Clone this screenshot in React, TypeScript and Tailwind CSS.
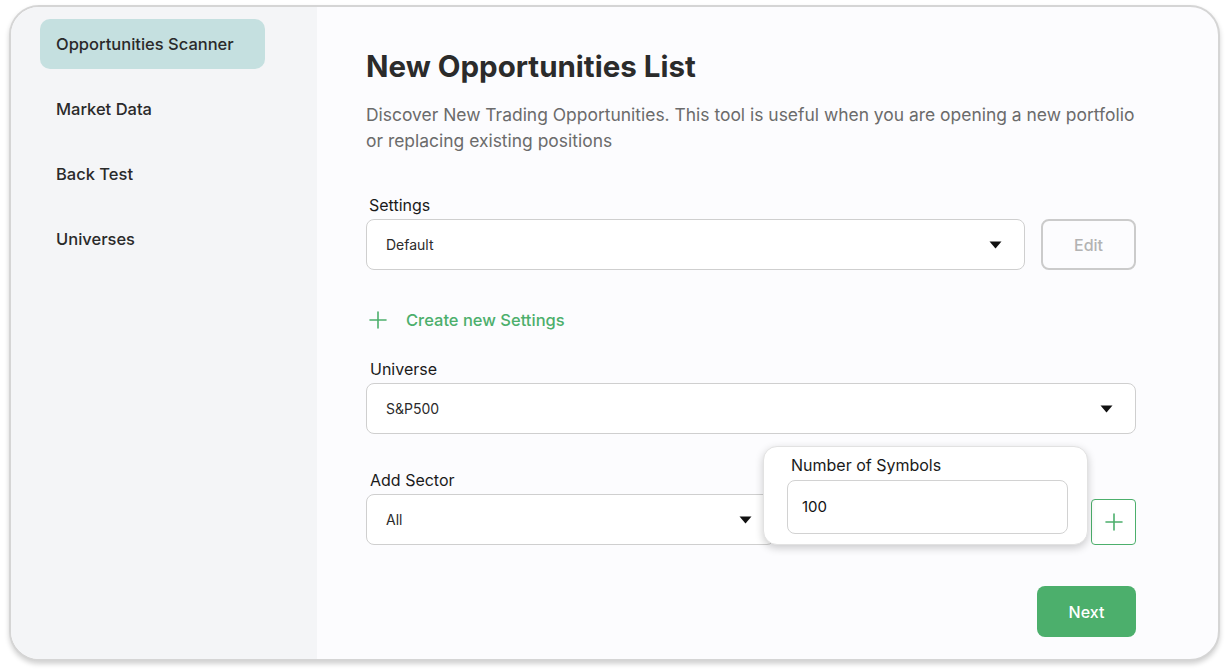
import React from "react";

const font = { fontFamily: "Inter, 'Noto Sans', sans-serif" };

function Caret() {
  return (
    <svg width="13" height="8" viewBox="0 0 13 8" className="shrink-0">
      <path d="M0.5 0.5 L12.5 0.5 L6.5 7.5 Z" fill="#111" />
    </svg>
  );
}

function Plus({ size = 18 }: { size?: number }) {
  return (
    <svg width={size} height={size} viewBox="0 0 18 18" className="shrink-0">
      <path d="M9 1 V17 M1 9 H17" stroke="#4caf6c" strokeWidth="1.6" strokeLinecap="round" />
    </svg>
  );
}

function Select({ value }: { value: string }) {
  return (
    <div className="h-[51px] w-full rounded-[8px] border border-[#cfcfcf] bg-white flex items-center justify-between pl-[19px] pr-[22px]">
      <span className="text-[14px] text-[#2b2b2b]">{value}</span>
      <Caret />
    </div>
  );
}

export default function App() {
  const nav = ["Opportunities Scanner", "Market Data", "Back Test", "Universes"];
  return (
    <div className="w-[1228px] h-[672px] bg-white overflow-hidden" style={font}>
      <div className="ml-[9px] mt-[5px] w-[1211px] h-[656px] rounded-[30px] border-2 border-[#d5d5d5] shadow-[0_3px_5px_rgba(0,0,0,0.18)] overflow-hidden flex bg-[#fcfcfe]">
        <aside className="w-[306px] shrink-0 h-full bg-[#f4f5f7] pt-[12px] pl-[29px] flex flex-col gap-[15px]">
          {nav.map((n, i) => (
            <div
              key={n}
              className={`w-[225px] h-[50px] rounded-[10px] flex items-center pl-[16px] text-[16.5px] font-medium text-[#2a2a2a] ${
                i === 0 ? "bg-[#c5e0e0]" : ""
              }`}
            >
              {n}
            </div>
          ))}
        </aside>
        <main className="flex-1 min-w-0 pl-[49px] pt-[41px] pr-[82px]">
          <h1 className="text-[29.5px] leading-[36px] font-bold text-[#2b2b2b]">New Opportunities List</h1>
          <p className="mt-[18px] mr-[-12px] text-[17.45px] leading-[26px] text-[#6b6b6b]">
            Discover New Trading Opportunities. This tool is useful when you are opening a new portfolio or
            replacing existing positions
          </p>

          <div className="mt-[39px] text-[16px] leading-[24px] text-[#1a1a1a] pl-[3px]">Settings</div>
          <div className="mt-[2px] flex gap-[16px]">
            <div className="flex-1">
              <Select value="Default" />
            </div>
            <button className="w-[95px] h-[51px] rounded-[8px] border-2 border-[#cbcbcb] text-[16px] font-medium text-[#b3b3b3] bg-[#fcfcfe]">
              Edit
            </button>
          </div>

          <div className="mt-[38px] flex items-center h-[24px] pl-[3px]">
            <Plus />
            <span className="ml-[19px] text-[16.5px] font-medium text-[#4caf6c]">Create new Settings</span>
          </div>

          <div className="mt-[25px] text-[16px] leading-[24px] text-[#1a1a1a] pl-[4px]">Universe</div>
          <div className="mt-[2px]">
            <Select value="S&P500" />
          </div>

          <div className="relative mt-[34px] flex items-end">
            <div className="w-[409px]">
              <div className="text-[16px] leading-[24px] text-[#1a1a1a] pl-[4px]">Add Sector</div>
              <div className="mt-[2px]">
                <Select value="All" />
              </div>
            </div>
            <button className="ml-auto w-[45px] h-[46px] rounded-[4px] border border-[#4caf6c] flex items-center justify-center bg-white">
              <Plus size={18} />
            </button>
            <div className="absolute left-[397px] top-[-22px] w-[325px] h-[99px] rounded-[14px] bg-white border border-[#e2e2e2] shadow-[0_3px_8px_rgba(0,0,0,0.2)] pt-[6px] pl-[23px] pr-[19px]">
              <div className="text-[16px] leading-[24px] text-[#1a1a1a] pl-[4px]">Number of Symbols</div>
              <div className="mt-[3px] h-[54px] rounded-[8px] border border-[#d2d2d2] bg-white flex items-center pl-[14px] text-[15px] text-[#111]">
                100
              </div>
            </div>
          </div>

          <div className="mt-[41px] flex justify-end">
            <button className="w-[99px] h-[51px] rounded-[8px] bg-[#4caf6c] text-white text-[16px] font-medium">
              Next
            </button>
          </div>
        </main>
      </div>
    </div>
  );
}
